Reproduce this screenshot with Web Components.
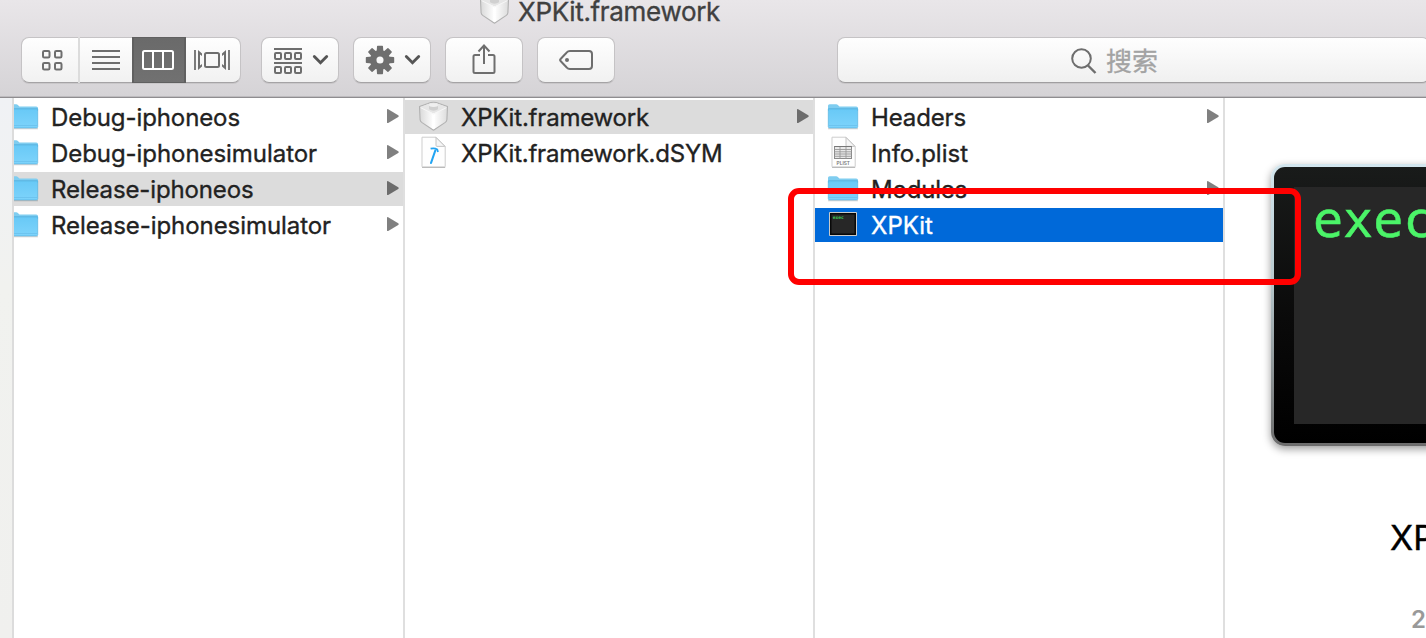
<!DOCTYPE html>
<html lang="zh">
<head>
<meta charset="utf-8">
<title>XPKit.framework</title>
<style>
html,body{margin:0;height:100%;overflow:hidden;background:#fff}
body{font-family:Inter,"Noto Sans CJK SC",sans-serif;color:#222}
</style>
</head>
<body>
<finder-window></finder-window>
<script>
const define = (name, html, init) => {
  const t = document.createElement('template');
  t.innerHTML = html;
  customElements.define(name, class extends HTMLElement {
    connectedCallback() {
      if (this.shadowRoot) return;
      this.attachShadow({mode: 'open'}).append(t.content.cloneNode(true));
      if (init) init(this, this.shadowRoot);
    }
  });
};

/* A label whose tracking is adjusted so it takes up the width it is given. */
define('fit-text', `<style>:host{display:block;white-space:nowrap;-webkit-text-stroke:.35px currentColor}span{display:inline-block}</style><span><slot></slot></span>`,
  (el, root) => {
    const s = root.querySelector('span');
    const w = +el.getAttribute('w');
    if (w) s.style.letterSpacing = (w - s.getBoundingClientRect().width) / el.textContent.length + 'px';
  });

const page = `<path d="M5 1.200h14l9.200 9.200v20q0 .6-.6.6H5.600q-.6 0-.6-.6z" fill="#fefefe" stroke="#cdcdcd"/><path d="M5 31.400h23.200" stroke="#aaa" stroke-width=".8"/>
    <path d="M19 1.500v7.900q0 1 1 1h7.900z" fill="#f6f6f6" stroke="#c0c0c0" stroke-width=".9"/>`;
const glyphs = {
  folder: `<svg width="32" height="34" viewBox="0 0 32 34"><defs><linearGradient id="f" x2="0" y2="1"><stop offset="0" stop-color="#68c9f6"/><stop offset="1" stop-color="#7dd3fb"/></linearGradient></defs>
    <path d="M1 28.600h30" stroke="#000" stroke-opacity=".16" stroke-width="1.400"/>
    <path d="M1 5.800q0-1.600 1.600-1.600h6.600q1 0 1.700.8l1.500 1.500h16.800q1.800 0 1.800 1.600V11H1z" fill="#7fcdf0"/>
    <path d="M1.300 8.900h29.400v17.700q0 1.300-1.300 1.300H2.600q-1.300 0-1.300-1.300z" fill="url(#f)" stroke="#57b3e0" stroke-width=".7"/>
    <path d="M1.500 8.600h29" stroke="#5db6e2" stroke-width=".8"/><path d="M2 25.500h28" stroke="#67bee9" stroke-width=".7"/></svg>`,
  framework: `<svg width="32" height="34" viewBox="0 0 32 34"><defs><linearGradient id="w" x2="1" y2="0"><stop offset="0" stop-color="#d9d9d9"/><stop offset=".5" stop-color="#fff"/><stop offset="1" stop-color="#dcdcdc"/></linearGradient></defs>
    <path d="M2.500 6.600 11 3.600q5.500-2.800 11 0l8.500 3-.6 13.200q-.2 1.600-1.600 2.600L16.500 30.200 4.700 22.400q-1.400-1-1.600-2.600z" fill="url(#w)" stroke="#b1b1b1" stroke-width="1.100" stroke-linejoin="round"/>
    <path d="M3.300 7 16.500 13.500 29.700 7 21.800 4.200q-5.300-2.600-10.600 0z" fill="#e6e6e6"/>
    <path d="M16.500 13.500v15" stroke="#fff" stroke-width="2.400"/>
    <path d="M12 5v4.300q4.500 2.800 9 0V5z" fill="#d0d0d0"/><ellipse cx="16.500" cy="5.200" rx="4.500" ry="1.700" fill="#efefef"/>
    <path d="m3.700 7.700 12.800 6.300 12.800-6.300" stroke="#f6f6f6" fill="none"/></svg>`,
  dsym: `<svg width="32" height="34" viewBox="0 0 32 34">${page}
    <path d="m18.300 14.500-4.300 12.500" stroke="#22a4f2" stroke-width="2.100" stroke-linecap="round"/><path d="M13.600 12.700q4-1 6.600.7l.8 2.600" fill="none" stroke="#22a4f2" stroke-width="1.800"/></svg>`,
  plist: `<svg width="32" height="34" viewBox="0 0 32 34">${page}
    <rect x="7.500" y="10.500" width="17" height="12" fill="#e8e8e8" stroke="#8b8b8b"/><path d="M7.500 13.500h17M7.500 15.800h17M7.500 18h17M7.500 20.300h17M13 10.500v12M19 10.500v12" stroke="#999" stroke-width=".9"/>
    <path d="M7.500 10.500h17" stroke="#777"/><text x="16.300" y="28.700" text-anchor="middle" font-family="Inter" font-size="4.800" font-weight="600" fill="#777">PLIST</text></svg>`,
  exec: `<svg width="32" height="34" viewBox="0 0 32 34"><rect x="2" y="4" width="28" height="24" rx=".8" fill="#c7c9c9"/><rect x="3" y="5" width="26" height="22" fill="#080808"/><rect x="4.500" y="6.500" width="23" height="19" fill="#272727"/>
    <text x="5.800" y="11.300" font-family="DejaVu Sans Mono" font-size="4.600" font-weight="700" fill="#3ecb58">exec</text></svg>`
};

define('file-icon', `<style>:host{display:block;width:32px;height:34px;flex:none}svg{display:block}</style>`,
  (el, root) => root.append(document.createRange().createContextualFragment(glyphs[el.getAttribute('kind')])));

define('file-column', `<style>
  :host{display:block;box-sizing:border-box;width:410px;flex:none;border-right:2px solid #dfdfdf;padding-top:2px;overflow:hidden}
  :host([first]){width:391px}
  </style><slot></slot>`);

customElements.define('browser-row', class extends HTMLElement {
  connectedCallback() {
    if (this.shadowRoot) return;
    this.attachShadow({mode: 'open'}).innerHTML = `<style>
      :host{display:flex;height:34px;margin-bottom:2px;padding-left:12px;font-size:24px;line-height:36px;box-sizing:border-box}
      :host([inset]){padding-left:0}
      :host([inset]) file-icon{margin-left:-7px}
      :host([current]){background:#dcdcdc}
      :host([chosen]){background:#0069d9;color:#fff}
      fit-text{margin-left:12px;flex:1}
      svg{margin-right:4px;flex:none}
      path{fill:#808080}:host([current]) path{fill:#6c6c6c}
      </style><file-icon kind="${this.getAttribute('kind')}"></file-icon><fit-text w="${this.getAttribute('w')}">${this.getAttribute('label')}</fit-text>
      ${this.hasAttribute('open') ? '<svg width="12" height="34" viewBox="0 0 12 34"><path d="M0 10q0-1.300 1.200-.7l10 6q1.200.8 0 1.600l-10 6Q0 23.500 0 22.200z"/></svg>' : ''}`;
  }
});

define('tool-button', `<style>
  :host{display:block;box-sizing:border-box;width:78px;height:46px;border:1px solid #c5c3c5;border-bottom-color:#a5a3a5;border-radius:8px;background:linear-gradient(#fefefe,#f1f1f1);box-shadow:0 1px 0 #c9c7c9;margin-right:14px;flex:none}
  ::slotted(svg){display:block;margin:-1px}
  </style><slot></slot>`);

define('view-switch', `<style>
  :host{display:flex;box-sizing:border-box;width:220px;height:46px;border:1px solid #c5c3c5;border-bottom-color:#a5a3a5;border-radius:8px;background:linear-gradient(#fefefe,#f1f1f1);box-shadow:0 1px 0 #c9c7c9;margin-right:20px;flex:none}
  div{box-sizing:border-box;height:46px;margin-top:-1px}
  svg{display:block;fill:none;stroke:#6e6e6e;stroke-width:2}
  .a{width:58px;border-right:2px solid #dcdcdc}.b{width:52px}.b svg{margin-left:-1px}.c{width:54px;background:linear-gradient(#6a6a6a,#717171);border:solid #606060;border-width:1px 2px}.c svg{stroke:#fff;margin:-1px -2px}.d{width:54px}
  .d path{stroke-width:1.800}.d .wing{fill:#6e6e6e;stroke:none}
  </style>
  <div class="a"><svg width="56" height="46"><rect x="21" y="14" width="6.500" height="6.500" rx="1.300"/><rect x="33" y="14" width="6.500" height="6.500" rx="1.300"/><rect x="21" y="26" width="6.500" height="6.500" rx="1.300"/><rect x="33" y="26" width="6.500" height="6.500" rx="1.300"/></svg></div>
  <div class="b"><svg width="53" height="46"><path d="M13 14h28M13 20h28M13 26h28M13 32h28"/></svg></div>
  <div class="c"><svg width="54" height="46"><rect x="11" y="14" width="30" height="18" rx="1.500"/><path d="M21 14v18M31 14v18"/></svg></div>
  <div class="d"><svg width="54" height="46"><rect x="19" y="16" width="14" height="14" rx="1.500"/><path d="M9 13v20M43 13v20"/><path class="wing" d="M12 13l4 3.500v2.500l-2-1.500v11l2-1.500v2.500L12 33zM40 13l-4 3.500v2.500l2-1.500v11l-2-1.500v2.500l4 3.500z"/></svg></div>`);

define('search-field', `<style>
  :host{display:flex;box-sizing:border-box;width:593px;height:46px;border:1px solid #c5c3c5;border-bottom-color:#a09ea0;border-radius:8px;background:linear-gradient(#fefefe,#f0f0f0);box-shadow:0 1px 0 #c9c7c9;flex:none;margin-left:208px;font:26px/43px "Noto Sans CJK SC",sans-serif;color:#a3a3a3;-webkit-text-stroke:.3px currentColor}
  svg{margin-left:232px;margin-right:9px;flex:none}
  </style><svg width="27" height="44" fill="none" stroke="#6e6e6e" stroke-width="2"><circle cx="11.500" cy="20.500" r="9.300"/><path d="m18 27.500 7.500 7.500" stroke-width="2.400"/></svg><slot></slot>`);

define('title-bar', `<style>
  :host{display:flex;height:37px;padding-left:478px}
  file-icon{margin-top:-7px}
  fit-text{margin-left:8px;font-size:26px;line-height:32px;margin-top:-4px;color:#404040}
  </style><file-icon kind="framework"></file-icon><fit-text w="202">XPKit.framework</fit-text>`);

const gear = Array.from({length: 8}, (_, i) => `<path d="M24 9.500q0-.7.700-.7h4.600q.7 0 .7.7l.4 6h-6.800z" transform="rotate(${i * 45} 27 23)"/>`).join('');
const chevron = x => `<path d="m${x} 19.500 6.200 6.200 6.200-6.200" stroke="#555" stroke-width="2.900" stroke-linecap="round" stroke-linejoin="miter"/>`;
define('finder-toolbar', `<style>
  :host{display:block;height:98px;box-sizing:border-box;background:linear-gradient(#e9e6e9,#d5d3d6);border-bottom:1px solid #8f8d90;box-shadow:inset 0 -1px #bdbbbe;overflow:hidden}
  .tools{display:flex;padding-left:21px;height:50px}
  </style><title-bar></title-bar><div class="tools"><view-switch></view-switch>
  <tool-button><svg width="78" height="46" fill="none" stroke="#6e6e6e" stroke-width="2"><path d="M13 12h28M13 26h28"/><rect x="14" y="16" width="6" height="6" rx="1"/><rect x="24" y="16" width="6" height="6" rx="1"/><rect x="34" y="16" width="6" height="6" rx="1"/><rect x="14" y="30" width="6" height="6" rx="1"/><rect x="24" y="30" width="6" height="6" rx="1"/><rect x="34" y="30" width="6" height="6" rx="1"/>${chevron(53.3)}</svg></tool-button>
  <tool-button><svg width="78" height="46" fill="none"><g fill="#6e6e6e">${gear}</g><circle cx="27" cy="23" r="6.800" stroke="#6e6e6e" stroke-width="6.500"/>${chevron(53.3)}</svg></tool-button>
  <tool-button><svg width="78" height="46" fill="none" stroke="#6e6e6e" stroke-width="2"><path d="M35 18h-5q-1.500 0-1.500 1.500v15q0 1.500 1.500 1.500h18q1.500 0 1.500-1.500v-15q0-1.500-1.500-1.500h-5M39 27V9M33.500 14.500 39 8.500l5.500 6"/></svg></tool-button>
  <tool-button><svg width="78" height="46" fill="none" stroke="#6e6e6e" stroke-width="2"><path d="M33 14h19q3 0 3 3v12q0 3-3 3H33q-2 0-3.500-1.700l-5.700-6Q22.500 23 23.800 21.700l5.700-6Q31 14 33 14z"/><circle cx="30" cy="23" r="2" fill="#6e6e6e" stroke="none"/></svg></tool-button>
  <search-field>搜索</search-field></div>`);

define('file-preview', `<style>
  :host{display:block;flex:1;min-width:0;overflow:hidden}
  .frame{box-sizing:border-box;width:366px;height:282px;margin:66px 0 0 46px;border-radius:14px;padding:3px;background:linear-gradient(#d3e6ee,#b9cacf 40%,#6c6c6c);box-shadow:0 3px 9px #0006}
  .bezel{box-sizing:border-box;height:276px;border-radius:11px;padding:20px;background:linear-gradient(#191b1a,#0a0a0a 55%,#000)}
  .screen{box-sizing:border-box;height:237px;background:#272727;color:#4bf468;font:50px/58px "DejaVu Sans Mono",monospace;padding:4px 0 0 19px;-webkit-text-stroke:.5px currentColor}
  .name{margin:74px 0 0 165px;font-size:34px;line-height:36px;color:#000;-webkit-text-stroke:.4px currentColor}
  .kind{margin:49px 0 0 186px;font-size:24px;line-height:30px;font-weight:600;color:#999}
  </style><div class="frame"><div class="bezel"><div class="screen">exec</div></div></div><div class="name">XPKit</div><div class="kind">2</div>`);

define('finder-window', `<style>
  :host{display:block;position:relative;width:1426px;height:638px;overflow:hidden;background:#fff}
  main{display:flex;height:540px}
  aside{box-sizing:border-box;width:14px;flex:none;background:linear-gradient(#f0f2f5,#f1f2ef 35%,#f0f0ee);border-right:2px solid #dcdcdc}
  .mark{position:absolute;left:788px;top:188px;width:513px;height:97px;box-sizing:border-box;border:6px solid #f00;border-radius:11px}
  </style>
  <finder-toolbar></finder-toolbar>
  <main><aside></aside>
  <file-column first>
    <browser-row inset kind="folder" label="Debug-iphoneos" w="189" open></browser-row>
    <browser-row inset kind="folder" label="Debug-iphonesimulator" w="266" open></browser-row>
    <browser-row inset kind="folder" label="Release-iphoneos" w="202.500" open current></browser-row>
    <browser-row inset kind="folder" label="Release-iphonesimulator" w="280" open></browser-row>
  </file-column>
  <file-column>
    <browser-row kind="framework" label="XPKit.framework" w="188" open current></browser-row>
    <browser-row kind="dsym" label="XPKit.framework.dSYM" w="261.500"></browser-row>
  </file-column>
  <file-column>
    <browser-row kind="folder" label="Headers" w="95" open></browser-row>
    <browser-row kind="plist" label="Info.plist" w="97"></browser-row>
    <browser-row kind="folder" label="Modules" w="96" open></browser-row>
    <browser-row kind="exec" label="XPKit" w="62" chosen></browser-row>
  </file-column>
  <file-preview></file-preview></main>
  <div class="mark"></div>`);
</script>
</body>
</html>
